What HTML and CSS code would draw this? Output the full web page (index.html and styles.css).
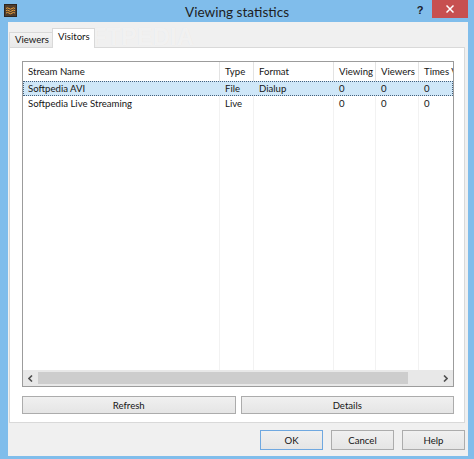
FILE: index.html
```html
<!DOCTYPE html>
<html>
<head>
<meta charset="utf-8">
<title>Viewing statistics</title>
<link rel="stylesheet" href="styles.css">
</head>
<body>
<div class="window">
  <div class="titlebar">
    <div class="tb-left">
      <svg class="app-icon" viewBox="0 0 13 13">
        <rect x="0.5" y="0.5" width="12" height="12" fill="#4e3d2f" stroke="#2f251d"/>
        <path d="M2 4.5 q1.5 -1.4 3 0 t3 0 t3 0" stroke="#eea23a" stroke-width="1" fill="none"/>
        <path d="M2 6.8 q1.5 -1.4 3 0 t3 0 t3 0" stroke="#eea23a" stroke-width="1" fill="none"/>
        <path d="M2 9.1 q1.5 -1.4 3 0 t3 0 t3 0" stroke="#eea23a" stroke-width="1" fill="none"/>
      </svg>
    </div>
    <div class="title">Viewing statistics</div>
    <div class="tb-right">
      <div class="help">?</div>
      <div class="close">
        <svg class="close-x" viewBox="0 0 8 8">
          <path d="M0.5 0.5 L7.5 7.5 M7.5 0.5 L0.5 7.5" stroke="#fff" stroke-width="1.5"/>
        </svg>
      </div>
    </div>
  </div>
  <div class="frame">
    <div class="client">
      <div class="tabs">
        <div class="tab">Viewers</div>
        <div class="tab active">Visitors</div>
      </div>
      <div class="pane">
        <div class="list">
          <div class="lv">
            <div class="row head">
              <div class="cell">Stream Name</div>
              <div class="cell">Type</div>
              <div class="cell">Format</div>
              <div class="cell">Viewing</div>
              <div class="cell">Viewers</div>
              <div class="cell">Times Viewed</div>
            </div>
            <div class="row sel">
              <div class="cell">Softpedia AVI</div>
              <div class="cell">File</div>
              <div class="cell">Dialup</div>
              <div class="cell">0</div>
              <div class="cell">0</div>
              <div class="cell">0</div>
            </div>
            <div class="row">
              <div class="cell">Softpedia Live Streaming</div>
              <div class="cell">Live</div>
              <div class="cell"></div>
              <div class="cell">0</div>
              <div class="cell">0</div>
              <div class="cell">0</div>
            </div>
            <div class="row filler">
              <div class="cell"></div>
              <div class="cell"></div>
              <div class="cell"></div>
              <div class="cell"></div>
              <div class="cell"></div>
              <div class="cell"></div>
            </div>
          </div>
          <div class="hscroll">
            <div class="arrow">
              <svg viewBox="0 0 5 7" class="chev"><path d="M4 0.5 L1 3.5 L4 6.5" stroke="#505050" stroke-width="1.6" fill="none"/></svg>
            </div>
            <div class="track"><div class="thumb"></div></div>
            <div class="arrow">
              <svg viewBox="0 0 5 7" class="chev"><path d="M1 0.5 L4 3.5 L1 6.5" stroke="#505050" stroke-width="1.6" fill="none"/></svg>
            </div>
          </div>
        </div>
        <div class="pane-buttons">
          <button class="btn">Refresh</button>
          <button class="btn">Details</button>
        </div>
      </div>
      <div class="dlg-buttons">
        <button class="btn dbtn ok">OK</button>
        <button class="btn dbtn">Cancel</button>
        <button class="btn dbtn">Help</button>
      </div>
    </div>
  </div>
  <span class="watermark">SOFTPEDIA</span>
</div>
</body>
</html>
```

FILE: styles.css
```css
html, body {
  margin: 0;
  padding: 0;
}
body {
  width: 474px;
  height: 459px;
  overflow: hidden;
  font-family: Lato, "Liberation Sans", sans-serif;
  font-size: 9.6px;
  color: #151515;
}
.window {
  position: relative;
  width: 474px;
  height: 459px;
  background: #80bdeb;
  display: flex;
  flex-direction: column;
}
.titlebar {
  height: 22px;
  display: grid;
  grid-template-columns: 1fr auto 1fr;
  align-items: start;
}
.tb-left {
  display: flex;
  padding: 4px 0 0 4px;
}
.app-icon {
  width: 13px;
  height: 13px;
  display: block;
}
.title {
  font-size: 13.6px;
  line-height: 22px;
  padding-top: 1px;
  color: #1e1e1e;
}
.tb-right {
  display: flex;
  justify-content: flex-end;
  padding-right: 6px;
}
.help {
  width: 24px;
  height: 18px;
  text-align: center;
  font-family: "Liberation Sans", sans-serif;
  font-weight: bold;
  font-size: 11px;
  line-height: 20px;
  color: #1a1a2a;
}
.close {
  width: 36px;
  height: 18px;
  background: #c75050;
  display: flex;
  align-items: center;
  justify-content: center;
}
.close-x {
  width: 8px;
  height: 8px;
  display: block;
}
.frame {
  flex: 1;
  display: flex;
  padding: 0 6px 3px 8px;
}
.client {
  flex: 1;
  background: #f0f0f0;
  padding: 0 3px 6px 1px;
  display: flex;
  flex-direction: column;
}
.tabs {
  height: 25px;
  display: flex;
  align-items: flex-end;
  position: relative;
  z-index: 1;
}
.tab {
  box-sizing: border-box;
  width: 44px;
  height: 15px;
  border: 1px solid #d9d9d9;
  border-bottom: none;
  background: linear-gradient(#f3f3f3, #e9e9e9);
  padding-left: 5px;
  line-height: 14px;
}
.tab.active {
  width: 43px;
  height: 20px;
  margin-left: -1px;
  margin-bottom: -1px;
  background: #fff;
  padding-left: 5px;
  line-height: 16px;
}
.pane {
  height: 376px;
  box-sizing: border-box;
  border: 1px solid #d9d9d9;
  background: #fff;
  padding: 13px 10px 8px 12px;
  display: flex;
  flex-direction: column;
}
.list {
  height: 326px;
  box-sizing: border-box;
  border: 1px solid #9c9c9c;
  display: flex;
  flex-direction: column;
  overflow: hidden;
}
.lv {
  flex: 1;
  display: flex;
  flex-direction: column;
  overflow: hidden;
}
.row {
  display: grid;
  grid-template-columns: 197px 34px 80px 42px 43px 1fr;
  height: 15px;
  line-height: 15px;
}
.cell {
  box-sizing: border-box;
  border-right: 1px solid #f2f2f2;
  padding-left: 5px;
  white-space: nowrap;
  overflow: hidden;
}
.cell:last-child {
  border-right: none;
}
.row.head {
  height: 19px;
  line-height: 19px;
}
.row.head .cell {
  border-right-color: #e3e3e3;
}
.row.sel {
  background: #cfe7f8;
  outline: 1px dotted #44607c;
  outline-offset: -1px;
}
.row.sel .cell {
  border-right-color: transparent;
}
.row.filler {
  flex: 1;
  height: auto;
}
.hscroll {
  height: 16px;
  display: flex;
  background: #e8e8e8;
}
.arrow {
  width: 15px;
  display: flex;
  align-items: center;
  justify-content: center;
}
.chev {
  width: 5px;
  height: 7px;
  display: block;
}
.track {
  flex: 1;
  padding: 2px 0;
  display: flex;
}
.thumb {
  width: 370px;
  background: #cdcdcd;
}
.btn {
  box-sizing: border-box;
  margin: 0;
  padding: 0;
  font: inherit;
  color: #151515;
  border: 1px solid #acacac;
  background: linear-gradient(#f0f0f0, #e5e5e5);
  text-align: center;
}
.pane-buttons {
  margin-top: 9px;
  height: 18px;
  display: flex;
  gap: 5px;
}
.pane-buttons .btn {
  flex: 1;
}
.dlg-buttons {
  margin-top: 7px;
  height: 20px;
  display: flex;
  justify-content: flex-end;
  gap: 8px;
}
.dbtn {
  width: 63px;
}
.dbtn.ok {
  border-color: #6fa8e0;
}
.watermark {
  position: absolute;
  left: 58px;
  top: 24px;
  font-family: "Liberation Sans", sans-serif;
  font-weight: bold;
  font-size: 23px;
  letter-spacing: 0.5px;
  color: rgba(255, 255, 255, 0.55);
  text-shadow: 0 0 1px rgba(0, 0, 0, 0.06);
  pointer-events: none;
  z-index: 0;
}
```
